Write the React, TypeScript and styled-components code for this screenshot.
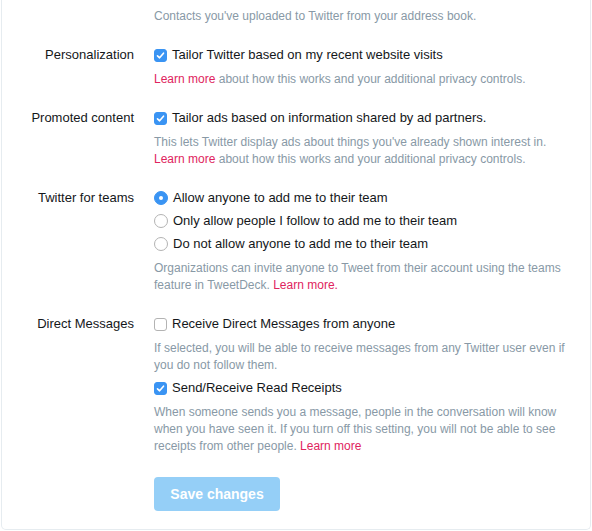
import React from 'react';
import styled, { createGlobalStyle } from 'styled-components';

const GlobalStyle = createGlobalStyle`
  body {
    margin: 0;
    background: #ffffff;
    font-family: "Liberation Sans", Arial, sans-serif;
  }
`;

const Page = styled.div`
  width: 592px;
  height: 531px;
  overflow: hidden;
  padding: 0 1px;
  box-sizing: border-box;
`;

const Card = styled.div`
  border: 1px solid #e6ecf0;
  border-top: none;
  border-radius: 0 0 5px 5px;
  background: #fff;
  padding: 8px 0 18px;
  display: flex;
  flex-flow: column;
  gap: 21px;
`;

const Row = styled.div`
  display: grid;
  grid-template-columns: 132px 414px;
  column-gap: 20px;
`;

const Label = styled.div`
  font-size: 13px;
  line-height: 18px;
  color: #14171a;
  text-align: right;
`;

const Controls = styled.div`
  display: flex;
  flex-flow: column;
`;

const Option = styled.label`
  display: flex;
  align-items: center;
  gap: 5px;
  font-size: 13px;
  line-height: 18px;
  color: #14171a;
  margin-top: 5px;
  &:first-child {
    margin-top: 0;
  }
`;

const Box = styled.span<{ checked?: boolean }>`
  width: 13px;
  height: 13px;
  box-sizing: border-box;
  border-radius: 3px;
  display: inline-flex;
  align-items: center;
  justify-content: center;
  flex: none;
  background: ${(p) => (p.checked ? '#3a94f3' : '#fff')};
  border: 1px solid ${(p) => (p.checked ? '#3a94f3' : '#b3b3b3')};
`;

const Radio = styled.span<{ checked?: boolean }>`
  width: 14px;
  height: 14px;
  box-sizing: border-box;
  border-radius: 50%;
  display: inline-flex;
  align-items: center;
  justify-content: center;
  flex: none;
  background: ${(p) => (p.checked ? '#3a94f3' : '#fff')};
  border: 1px solid ${(p) => (p.checked ? '#3a94f3' : '#b3b3b3')};
  &::after {
    content: '';
    display: ${(p) => (p.checked ? 'block' : 'none')};
    width: 4px;
    height: 4px;
    border-radius: 50%;
    background: #fff;
  }
`;

const Desc = styled.p`
  margin: 7px 0 0;
  font-size: 12px;
  line-height: 17px;
  color: #8899a6;
  &:first-child {
    margin-top: 0;
  }
`;

const Link = styled.a`
  color: #e0245e;
  text-decoration: none;
`;

const SaveButton = styled.button`
  margin-top: 22px;
  width: 126px;
  height: 34px;
  border: none;
  border-radius: 4px;
  background: #95cff7;
  color: #fff;
  font-family: "Liberation Sans", Arial, sans-serif;
  font-size: 14px;
  font-weight: bold;
  align-self: flex-start;
`;

const Check = ({ checked }: { checked?: boolean }) => (
  <Box checked={checked}>
    {checked && (
      <svg width="9" height="9" viewBox="0 0 9 9">
        <path d="M1.5 4.8 L3.6 6.8 L7.5 2.2" fill="none" stroke="#fff" strokeWidth="1.6" strokeLinecap="round" strokeLinejoin="round" />
      </svg>
    )}
  </Box>
);

const App = () => {
  return (
    <Page>
      <GlobalStyle />
      <Card>
        <Row>
          <Label />
          <Controls>
            <Desc>Contacts you've uploaded to Twitter from your address book.</Desc>
          </Controls>
        </Row>
        <Row>
          <Label>Personalization</Label>
          <Controls>
            <Option><Check checked />Tailor Twitter based on my recent website visits</Option>
            <Desc><Link>Learn more</Link> about how this works and your additional privacy controls.</Desc>
          </Controls>
        </Row>
        <Row>
          <Label>Promoted content</Label>
          <Controls>
            <Option><Check checked />Tailor ads based on information shared by ad partners.</Option>
            <Desc>
              This lets Twitter display ads about things you've already shown interest in.
              <br />
              <Link>Learn more</Link> about how this works and your additional privacy controls.
            </Desc>
          </Controls>
        </Row>
        <Row>
          <Label>Twitter for teams</Label>
          <Controls>
            <Option><Radio checked />Allow anyone to add me to their team</Option>
            <Option><Radio />Only allow people I follow to add me to their team</Option>
            <Option><Radio />Do not allow anyone to add me to their team</Option>
            <Desc>
              Organizations can invite anyone to Tweet from their account using the teams feature in TweetDeck. <Link>Learn more.</Link>
            </Desc>
          </Controls>
        </Row>
        <Row>
          <Label>Direct Messages</Label>
          <Controls>
            <Option><Check />Receive Direct Messages from anyone</Option>
            <Desc>
              If selected, you will be able to receive messages from any Twitter user even if you do not follow them.
            </Desc>
            <Option><Check checked />Send/Receive Read Receipts</Option>
            <Desc>
              When someone sends you a message, people in the conversation will know when you have seen it. If you turn off this setting, you will not be able to see receipts from other people. <Link>Learn more</Link>
            </Desc>
            <SaveButton disabled>Save changes</SaveButton>
          </Controls>
        </Row>
      </Card>
    </Page>
  );
};

export default App;
